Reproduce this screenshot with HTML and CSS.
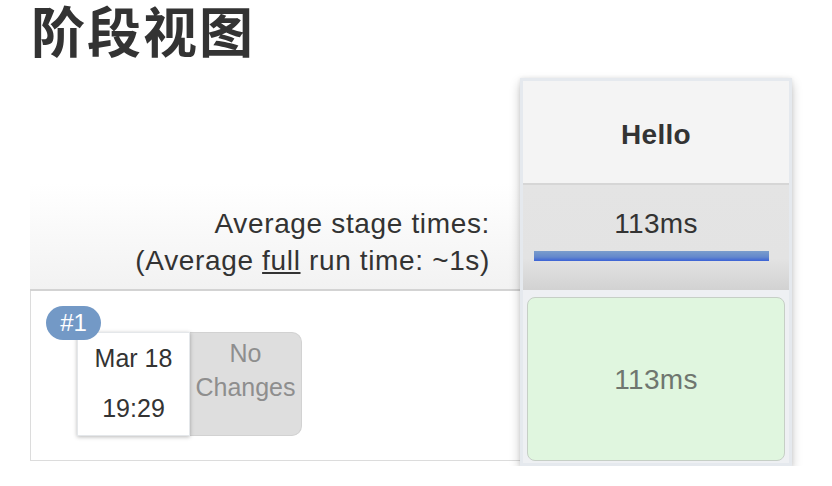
FILE: index.html
```html
<!DOCTYPE html>
<html lang="zh">
<head>
<meta charset="utf-8">
<title>阶段视图</title>
<link rel="stylesheet" href="styles.css">
</head>
<body>
<h1 class="title">阶段视图</h1>
<div class="stage-view">
  <div class="left-col">
    <div class="head-spacer"></div>
    <div class="averages">
      <div>Average stage times:</div>
      <div>(Average <u>full</u> run time: ~1s)</div>
    </div>
    <div class="run-row">
      <div class="run">
        <span class="badge">#1</span>
        <div class="run-date">
          <div>Mar 18</div>
          <div>19:29</div>
        </div>
        <div class="run-changes">No<br>Changes</div>
      </div>
    </div>
  </div>
  <div class="stage-col">
    <div class="stage-head">Hello</div>
    <div class="stage-avg">
      <div class="avg-time">113ms</div>
      <div class="bar" style="width:235px"></div>
    </div>
    <div class="stage-cell">
      <div class="cell-box">113ms</div>
    </div>
  </div>
</div>
</body>
</html>
```

FILE: styles.css
```css
html, body {
  margin: 0;
  padding: 0;
  background: #fff;
}
body {
  font-family: "Liberation Sans", Arial, sans-serif;
  color: #333;
}
.title {
  margin: 0 0 0 31px;
  padding-top: 2px;
  font-family: "Noto Sans CJK SC", "Noto Sans", sans-serif;
  font-weight: 700;
  font-size: 54px;
  letter-spacing: 2px;
  line-height: 56px;
  color: #333;
}
.stage-view {
  display: flex;
  margin: 20px 0 0 30px;
}
.left-col {
  width: 490px;
  display: flex;
  flex-direction: column;
}
.head-spacer {
  height: 106px;
}
.averages {
  height: 84px;
  padding: 21px 30px 0 0;
  text-align: right;
  font-size: 28px;
  line-height: 37px;
  letter-spacing: 0.65px;
  background: linear-gradient(to bottom, rgba(255,255,255,0) 0%, #f2f2f2 100%);
  border-bottom: 2px solid #d3d3d3;
}
.run-row {
  height: 170px;
  border-left: 1px solid #dcdcdc;
  border-bottom: 1px solid #dcdcdc;
  box-sizing: border-box;
  padding: 41px 0 0 46px;
}
.run {
  position: relative;
  display: flex;
}
.badge {
  position: absolute;
  left: -31px;
  top: -26px;
  z-index: 2;
  width: 55px;
  height: 34px;
  border-radius: 17px;
  background: #7399c6;
  color: #fff;
  font-size: 24px;
  line-height: 34px;
  text-align: center;
}
.run-date {
  width: 111px;
  height: 102px;
  border: 1px solid #e4e7ea;
  background: #fff;
  box-shadow: 0 1px 4px rgba(0,0,0,0.28);
  text-align: center;
  font-size: 25px;
  line-height: 50px;
  position: relative;
  z-index: 1;
}
.run-changes {
  width: 112px;
  height: 104px;
  box-sizing: border-box;
  border: 1px solid #d2d2d2;
  border-left: none;
  border-radius: 0 10px 10px 0;
  background: #dedede;
  color: #8e8e8e;
  text-align: center;
  font-size: 25px;
  line-height: 34px;
  padding-top: 3px;
}
.stage-col {
  width: 266px;
  border: 3px solid #e5e9ee;
  background: #eef0f3;
  box-shadow: 0 5px 10px rgba(0,0,0,0.22), 0 0 4px rgba(0,0,0,0.08);
  display: flex;
  flex-direction: column;
}
.stage-head {
  height: 102px;
  box-sizing: border-box;
  padding-top: 35px;
  background: #f4f4f4;
  text-align: center;
  font-weight: 700;
  font-size: 28px;
  line-height: 37px;
  letter-spacing: 0.3px;
}
.stage-avg {
  height: 107px;
  box-sizing: border-box;
  border-top: 2px solid #d6d6d6;
  padding-top: 20px;
  background: linear-gradient(to bottom, #e4e4e4 0%, #e3e3e3 70%, #d2d2d2 100%);
}
.avg-time {
  text-align: center;
  font-size: 28px;
  line-height: 37px;
  letter-spacing: 0.3px;
}
.bar {
  height: 10px;
  margin: 9px 0 0 11px;
  background: linear-gradient(to bottom, #7a9dcc 0%, #6388cc 60%, #3b62d6 100%);
}
.stage-cell {
  height: 173px;
  box-sizing: border-box;
  padding: 7px 4px 2px 4px;
  display: flex;
}
.cell-box {
  flex: 1;
  display: flex;
  align-items: center;
  justify-content: center;
  background: #e0f6df;
  border: 1px solid #c6cfc6;
  border-radius: 8px;
  color: #6f766f;
  font-size: 28px;
  line-height: 37px;
  letter-spacing: 0.3px;
}
```
